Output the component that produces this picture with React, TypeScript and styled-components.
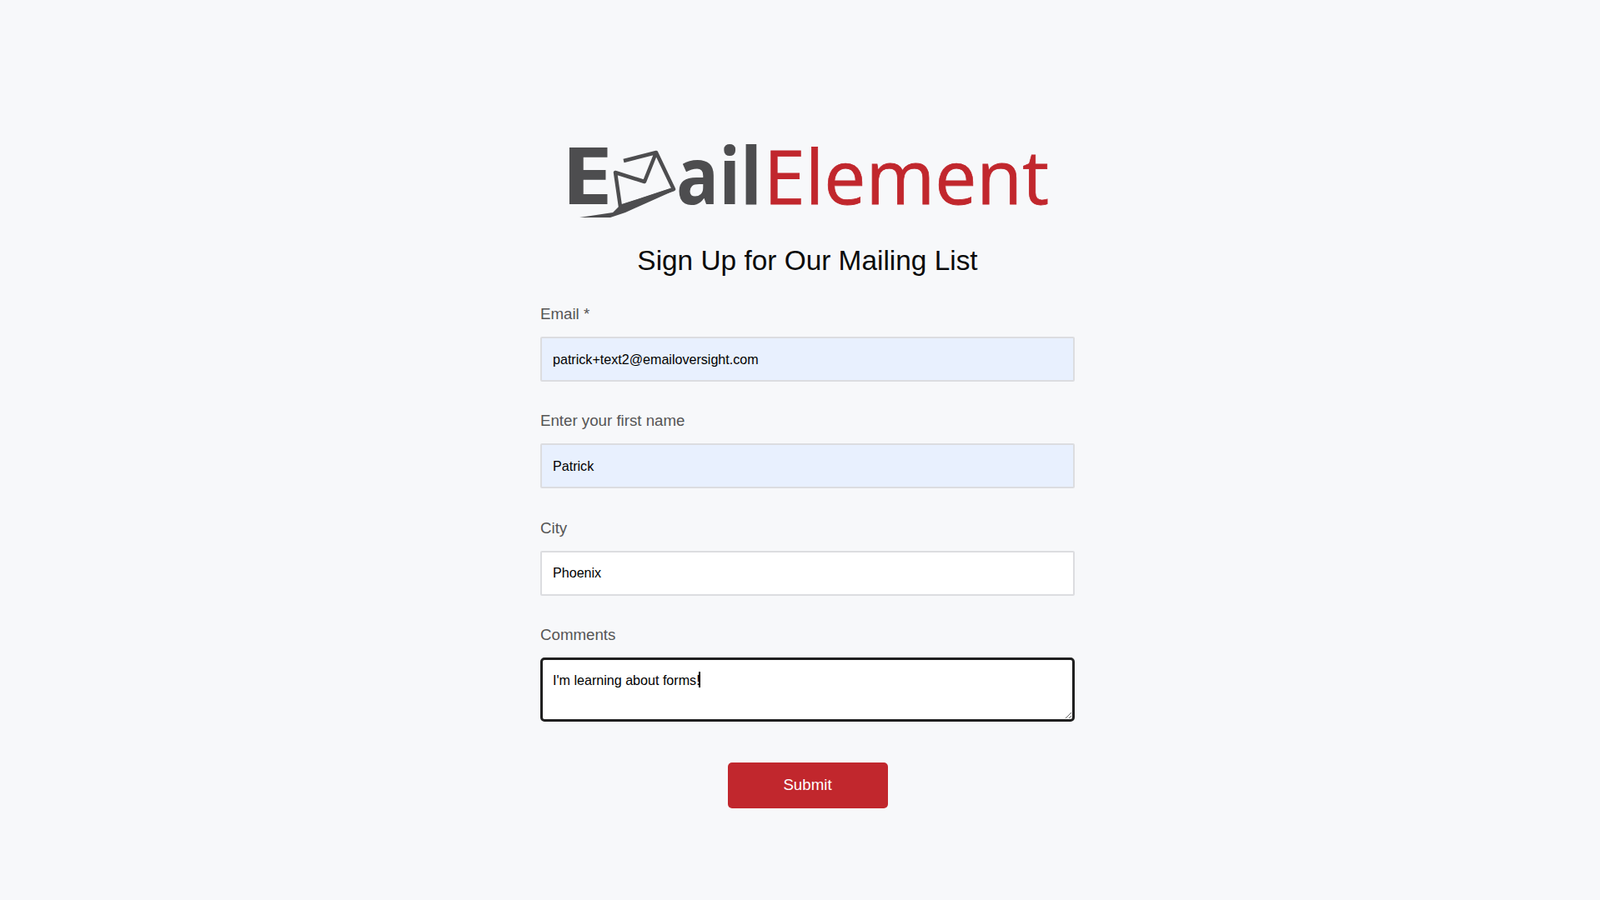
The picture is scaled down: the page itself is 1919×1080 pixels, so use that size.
import React from 'react';
import styled, { createGlobalStyle } from 'styled-components';

const GlobalStyle = createGlobalStyle`
    html, body {
        margin: 0;
        padding: 0;
        background: #f7f8fa;
    }
    body {
        font-family: "Liberation Sans", Arial, sans-serif;
    }
`;

const Page = styled.div`
    min-height: 1080px;
    box-sizing: border-box;
    padding: 170px 0 0 18px;
    display: flex;
    flex-direction: column;
    align-items: center;
`;

const LogoSvg = styled.svg`
    display: block;
    width: 641px;
    height: 105px;
    filter: blur(0.5px);
`;

const LogoText = styled.text<{ $red?: boolean }>`
    font-family: "Open Sans", "Noto Sans", sans-serif;
    font-size: ${(p) => (p.$red ? 90 : 95)}px;
    font-weight: ${(p) => (p.$red ? 500 : 700)};
    fill: ${(p) => (p.$red ? '#c1272d' : '#4d4d4f')};
    stroke: ${(p) => (p.$red ? '#c1272d' : 'none')};
    stroke-width: ${(p) => (p.$red ? 0.8 : 0)}px;
`;

const Title = styled.h1`
    margin: 18px 0 0;
    font-size: 33.4px;
    line-height: 40px;
    font-weight: 400;
    color: #0a0a0a;
    text-align: center;
`;

const Form = styled.form`
    width: 641px;
    margin-top: 31px;
    display: flex;
    flex-direction: column;
`;

const Field = styled.div`
    margin-bottom: 34.4px;
`;

const Label = styled.label`
    display: block;
    font-size: 18.7px;
    line-height: 26px;
    color: #555;
    margin-bottom: 14px;
`;

const Input = styled.input<{ $filled?: boolean }>`
    display: block;
    width: 100%;
    height: 54px;
    box-sizing: border-box;
    padding: 0 13px;
    border: 2px solid #dcdde0;
    border-radius: 2px;
    outline: none;
    font-family: inherit;
    font-size: 16.1px;
    color: #000;
    background: ${(p) => (p.$filled ? '#e8f0fe' : '#fff')};
`;

const TextAreaWrap = styled.div`
    position: relative;
`;

const TextArea = styled.textarea`
    display: block;
    width: 100%;
    height: 77px;
    box-sizing: border-box;
    padding: 14px 12px;
    border: 3px solid #1f1f1f;
    border-radius: 5px;
    outline: none;
    font-family: inherit;
    font-size: 16.1px;
    line-height: 20px;
    color: #000;
    background: #fff;
    caret-color: transparent;
`;

const Caret = styled.span`
    position: absolute;
    left: 190px;
    top: 17px;
    width: 2px;
    height: 19px;
    background: #000;
`;

const SubmitRow = styled.div`
    display: flex;
    justify-content: center;
    margin-top: 14px;
`;

const SubmitButton = styled.button`
    width: 192px;
    height: 55px;
    border: none;
    border-radius: 5px;
    background: #c1272d;
    color: #fff;
    font-family: inherit;
    font-size: 18.7px;
`;

const App = (): React.ReactElement => {
    return (
        <Page>
            <GlobalStyle />
            <LogoSvg viewBox="0 0 641 105">
                <LogoText x={25} y={75} textLength={62} lengthAdjust="spacingAndGlyphs">E</LogoText>
                {/* envelope */}
                <path
                    d="M100 23 L139 13 L160 57 L96 78 L90 37 L125 48 L139 13"
                    fill="none"
                    stroke="#4d4d4f"
                    strokeWidth="4.5"
                    strokeLinejoin="round"
                />
                <path d="M47 91 L87 85 L96 76 L160 55 L160 59 L102 85 L84 91 Z" fill="#4d4d4f" />
                <LogoText x={163} y={75} textLength={103} lengthAdjust="spacingAndGlyphs">ail</LogoText>
                <LogoText $red x={268} y={75} textLength={342} lengthAdjust="spacingAndGlyphs">Element</LogoText>
            </LogoSvg>
            <Title>Sign Up for Our Mailing List</Title>
            <Form>
                <Field>
                    <Label>Email *</Label>
                    <Input $filled readOnly value="patrick+text2@emailoversight.com" />
                </Field>
                <Field>
                    <Label>Enter your first name</Label>
                    <Input $filled readOnly value="Patrick" />
                </Field>
                <Field>
                    <Label>City</Label>
                    <Input readOnly value="Phoenix" />
                </Field>
                <Field>
                    <Label>Comments</Label>
                    <TextAreaWrap>
                        <TextArea readOnly value="I'm learning about forms!" />
                        <Caret />
                    </TextAreaWrap>
                </Field>
                <SubmitRow>
                    <SubmitButton type="button">Submit</SubmitButton>
                </SubmitRow>
            </Form>
        </Page>
    );
};

export default App;
